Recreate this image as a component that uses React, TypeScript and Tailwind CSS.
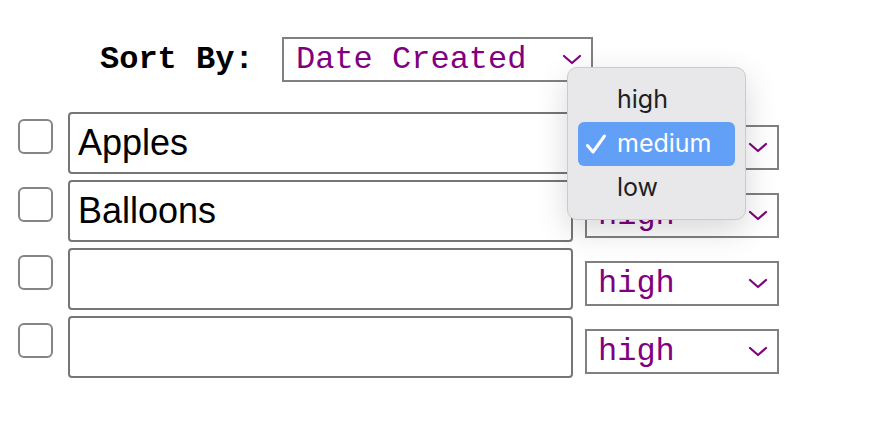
import React from "react";

const MONO = "font-['Liberation_Mono','Courier_New',monospace]";

const Chevron = () => (
  <svg
    width="20"
    height="11"
    viewBox="0 0 20 11"
    fill="none"
    stroke="#800080"
    strokeWidth="2.2"
    strokeLinecap="round"
    strokeLinejoin="round"
  >
    <polyline points="2,2 10,9 18,2" />
  </svg>
);

const Check = () => (
  <svg
    width="22"
    height="22"
    viewBox="0 0 22 22"
    fill="none"
    stroke="white"
    strokeWidth="3"
    strokeLinecap="round"
    strokeLinejoin="round"
  >
    <path d="M2.5 12.5 L8 19 L19.5 3" />
  </svg>
);

const items = [
  { id: 1, text: "Apples", priority: "high" },
  { id: 2, text: "Balloons", priority: "high" },
  { id: 3, text: "", priority: "high" },
  { id: 4, text: "", priority: "high" },
];

function PriorityMenu() {
  return (
    <div className="absolute left-[567px] top-[67px] w-[179px] h-[153px] rounded-[10px] border border-[#cbcbcd] bg-[#e8e8ea] shadow-[0_10px_32px_rgba(0,0,0,0.16)] px-[10px] pt-[10px] font-['Inter','Liberation_Sans',sans-serif] text-[25px]">
      <div className="h-[44px] flex items-center pl-[39px] text-[#1f1f1f]">
        high
      </div>
      <div className="h-[44px] flex items-center rounded-[6px] bg-[#62a0f8] text-white">
        <span className="w-[39px] pl-[7px] flex items-center">
          <Check />
        </span>
        <span>medium</span>
      </div>
      <div className="h-[44px] flex items-center pl-[39px] text-[#1f1f1f]">
        low
      </div>
    </div>
  );
}

export default function App() {
  return (
    <div className="relative w-[874px] h-[424px] bg-white overflow-hidden">
      <div className="flex items-center pt-[37px] pl-[100px]">
        <span
          className={`${MONO} w-[182px] font-bold text-[32px] leading-none text-black`}
        >
          Sort By:
        </span>
        <div
          className={`${MONO} w-[311px] h-[45px] border-2 border-[#808080] flex items-center justify-between pl-[12px] pr-[9px] text-[32px] text-[#800080]`}
        >
          <span>Date Created</span>
          <Chevron />
        </div>
      </div>

      <div className="flex flex-col gap-[6px] pt-[30px]">
        {items.map((item) => (
          <div key={item.id} className="flex items-start">
            <div className="ml-[18px] mt-[7px] w-[35px] h-[35px] rounded-[6px] border-2 border-[#858585] bg-white" />
            <input
              readOnly
              value={item.text}
              className="ml-[15px] w-[505px] h-[62px] rounded-[4px] border-2 border-[#767676] pl-[8px] text-[36px] text-black font-['Liberation_Sans',Arial,sans-serif] outline-none"
            />
            <div
              className={`${MONO} ml-[12px] mt-[13px] w-[194px] h-[45px] border-2 border-[#808080] flex items-center justify-between pl-[11px] pr-[9px] text-[32px] text-[#800080]`}
            >
              <span>{item.priority}</span>
              <Chevron />
            </div>
          </div>
        ))}
      </div>

      <PriorityMenu />
    </div>
  );
}
